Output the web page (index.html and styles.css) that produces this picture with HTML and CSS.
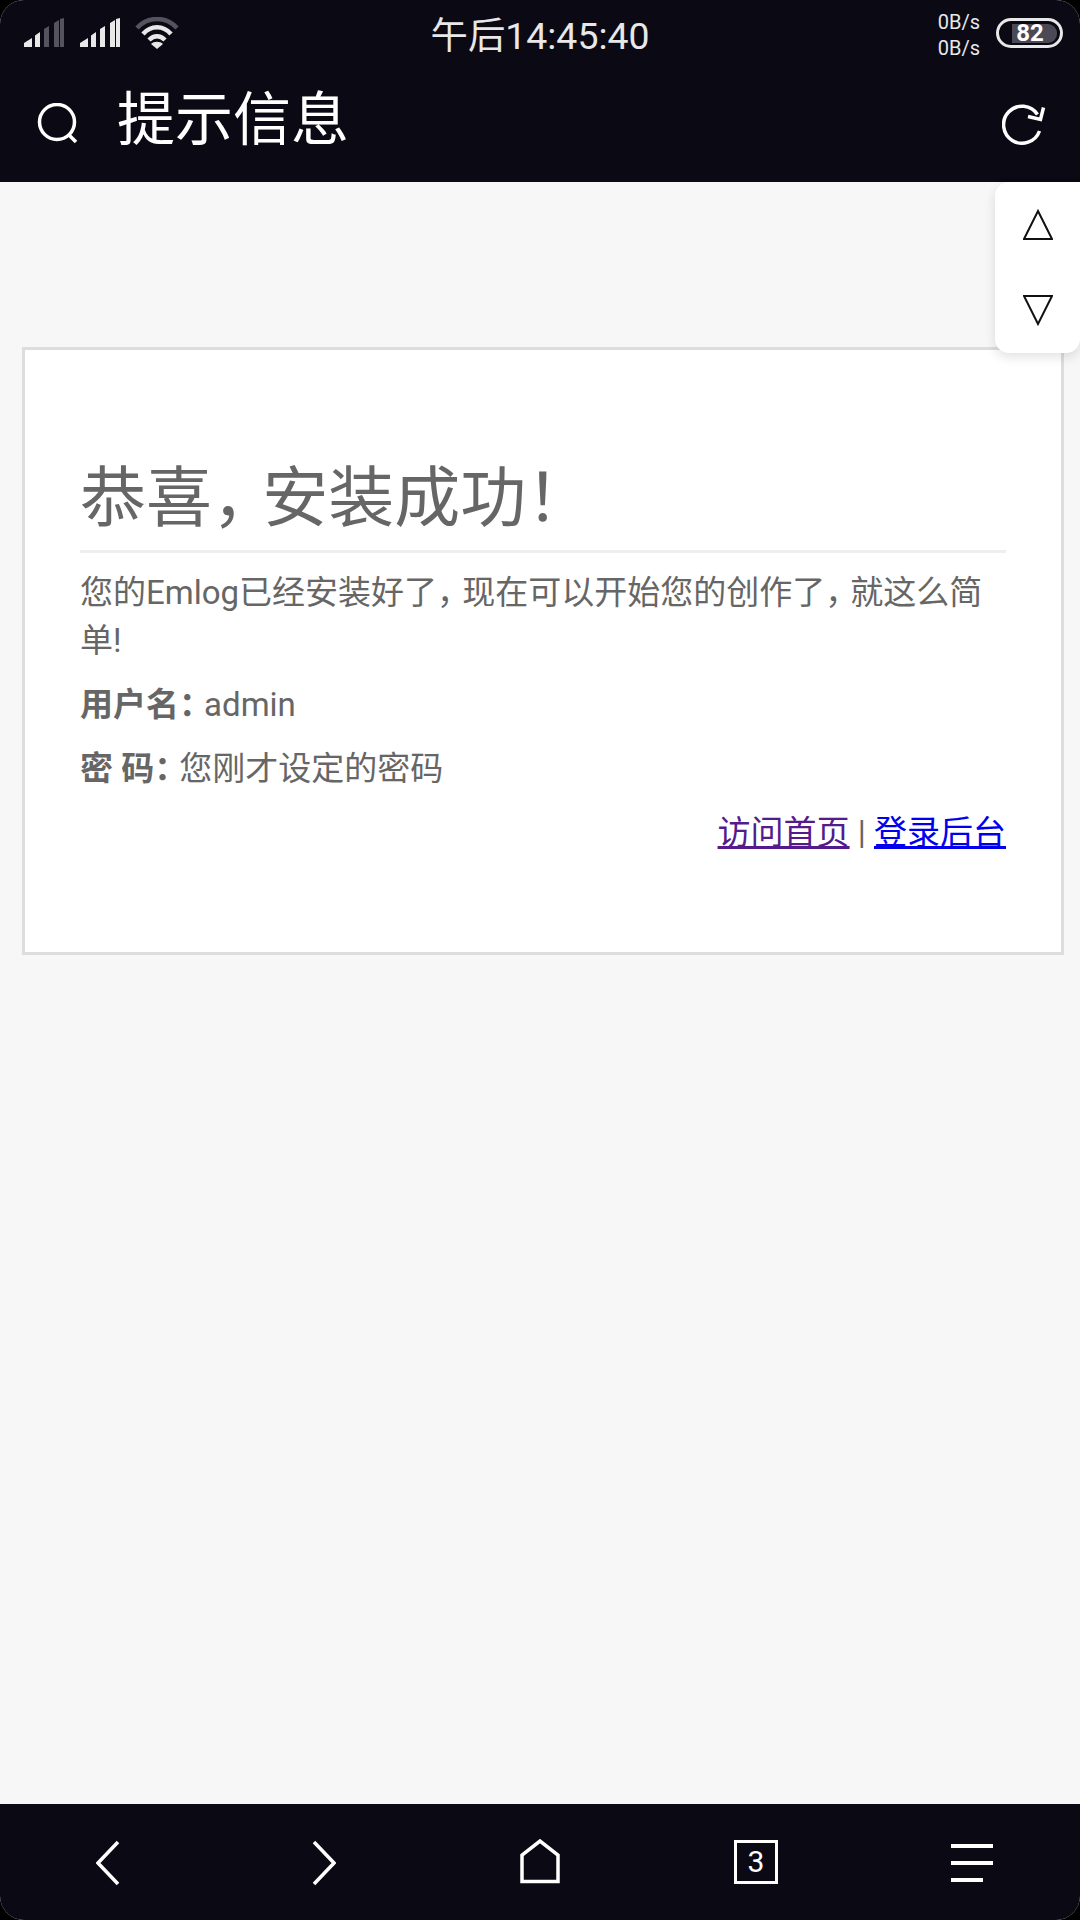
FILE: index.html
```html
<!DOCTYPE html>
<html lang="zh-CN">
<head>
<meta charset="utf-8">
<title>提示信息</title>
<link rel="stylesheet" href="styles.css">
</head>
<body>
<div class="app">
  <div class="status">
    <div class="status-left">
      <svg class="sig" width="40" height="29" viewBox="0 0 40 29"><path class="on" d="M0 29V25L8 20V29ZM11 29V17.500L16 14V29Z"/><path class="dim" d="M20 29V11L25 8V29ZM30 29V5L35 2V29Z"/><path class="dim2" d="M36 29V1L40 0V29Z"/></svg>
      <svg class="sig" width="40" height="29" viewBox="0 0 40 29"><path class="on" d="M0 29V25L8 20V29ZM11 29V17.500L16 14V29ZM20 29V11L25 8V29ZM30 29V5L35 2V29Z"/><path class="on" d="M36 29V1L40 0V29Z"/></svg>
      <svg class="wifi" width="44" height="32" viewBox="0 0 44 32"><path class="wf-dim" d="M2 11C13 -1 31 -1 42 11"/><path class="wf-on" d="M8 17C16 8 28 8 36 17"/><path class="wf-on" d="M14 23C19 18 25 18 30 23"/><path class="wf-fill" d="M22 32L16 27C19 24 25 24 28 27Z"/></svg>
    </div>
    <div class="clock">午后14:45:40</div>
    <div class="status-right">
      <div class="speed"><span>0B/s</span><span>0B/s</span></div>
      <div class="battery"><span class="batt-fill"></span><span class="batt-num">82</span></div>
    </div>
  </div>
  <header class="topbar">
    <svg class="ic-search" width="42" height="42" viewBox="0 0 42 42"><circle cx="20" cy="19" r="17.500"/><path d="M31 31L39 39"/></svg>
    <h2 class="page-title">提示信息</h2>
    <svg class="ic-refresh" width="44" height="44" viewBox="0 0 44 44"><path d="M37.500 27A18.500 18.500 0 1 1 35.500 10.500"/><path d="M26 12.500L38.500 15.500L41.500 3.500"/></svg>
  </header>
  <main class="content">
    <section class="card">
      <h1 class="card-title">恭喜<span class="pc">，</span>安装成功！</h1>
      <p class="line">您的Emlog已经安装好了<span class="pc">，</span>现在可以开始您的创作了<span class="pc">，</span>就这么简<br>单!</p>
      <p class="line"><b>用户名<span class="pc">：</span></b>admin</p>
      <p class="line"><b>密 码<span class="pc">：</span></b>您刚才设定的密码</p>
      <p class="line links"><a class="visited" href="#home">访问首页</a> | <a class="fresh" href="#admin">登录后台</a></p>
    </section>
    <div class="scroller">
      <svg width="30" height="31" viewBox="0 0 30 31"><path d="M15 2L29 30H1Z"/></svg>
      <svg width="30" height="31" viewBox="0 0 30 31"><path d="M1 1H29L15 29Z"/></svg>
    </div>
  </main>
  <nav class="bottombar">
    <div class="cell"><svg width="24" height="46" viewBox="0 0 24 46"><path d="M22 2L2 23L22 44"/></svg></div>
    <div class="cell"><svg width="24" height="46" viewBox="0 0 24 46"><path d="M2 2L22 23L2 44"/></svg></div>
    <div class="cell"><svg class="ic-home" width="40" height="46" viewBox="0 0 40 46"><path d="M2 42.500V16L20 2L38 16V42.500Z"/></svg></div>
    <div class="cell"><div class="tabs">3</div></div>
    <div class="cell"><div class="menu"><i></i><i></i><i class="short"></i></div></div>
  </nav>
</div>
</body>
</html>
```
FILE: styles.css
```css
* { box-sizing: border-box; }
html, body { margin: 0; padding: 0; background: #000; }
body { font-family: Roboto, "Noto Sans CJK SC", sans-serif; }
.app {
  width: 1080px;
  height: 1920px;
  display: flex;
  flex-direction: column;
  background: #f7f7f7;
  border-radius: 24px;
  overflow: hidden;
}
.status {
  height: 58px;
  flex: none;
  background: #0b0a14;
  display: grid;
  grid-template-columns: 1fr auto 1fr;
  align-items: start;
  padding: 0 17px 0 24px;
}
.status-left { display: flex; gap: 16px; padding-top: 18px; }
.sig .on { fill: #e8e8e8; }
.sig .dim { fill: #55545e; }
.sig .dim2 { fill: #55545e; }
.wifi path { fill: none; stroke-width: 4.500; }
.wifi .wf-dim { stroke: #55545e; }
.wifi .wf-on { stroke: #e8e8e8; }
.wifi .wf-fill { fill: #e8e8e8; stroke: none; }
.wifi { margin: -1px 0 0 -1px; }
.clock {
  color: #e8e8e8;
  font-size: 37.400px;
  line-height: 40px;
  padding-top: 16px;
  margin-left: -7px;
}
.status-right { display: flex; justify-content: flex-end; gap: 16px; padding-top: 9px; }
.speed {
  display: flex;
  flex-direction: column;
  color: #e8e8e8;
  font-size: 20px;
  line-height: 26px;
  align-items: flex-end;
}
.battery {
  width: 67px;
  height: 30px;
  margin-top: 9px;
  border: 3px solid #e8e8e8;
  border-radius: 15px;
  position: relative;
  display: flex;
  align-items: center;
  justify-content: center;
}
.batt-fill {
  position: absolute;
  left: 13px;
  top: 3px;
  bottom: 2px;
  right: 3px;
  background: #4a4955;
  border-radius: 0 9px 9px 0;
}
.batt-num {
  position: relative;
  color: #fff;
  font-size: 24px;
  font-weight: 700;
  line-height: 24px;
  margin-left: 1px;
}
.topbar {
  height: 124px;
  flex: none;
  background: #0b0a14;
  display: flex;
  align-items: flex-start;
  padding: 46px 34px 0 37px;
}
.topbar svg { fill: none; stroke: #fff; stroke-width: 3.500; flex: none; }
.ic-search { margin-top: -1px; }
.page-title {
  margin: -18px 0 0 38px;
  flex: 1;
  color: #fff;
  font-size: 58px;
  line-height: 68px;
  font-weight: 400;
}
.ic-refresh { margin-top: 0; }
.content {
  flex: 1;
  position: relative;
  padding: 165px 16px 0 22px;
  color: #666;
  font-size: 33px;
  line-height: 48px;
}
.card {
  height: 608px;
  background: #fff;
  border: 3px solid #ddd;
  padding: 112px 55px 0;
}
.card-title {
  margin: 0 0 16px;
  font-size: 66px;
  line-height: 74px;
  font-weight: 400;
  padding-bottom: 14px;
  border-bottom: 3px solid #eee;
}
.pc { font-feature-settings: "halt"; padding-right: .26em; }
.line { margin: 0 0 16px; }
.line b { font-weight: 700; }
.links { text-align: right; }
.visited { color: #551a8b; }
.fresh { color: #00e; }
.scroller {
  position: absolute;
  right: 0;
  top: 0;
  width: 85px;
  height: 171px;
  background: #fff;
  border-radius: 14px 0 14px 14px;
  box-shadow: 0 4px 12px rgba(0, 0, 0, .12);
  display: flex;
  flex-direction: column;
  gap: 55px;
  padding: 27px 0 0 28px;
}
.scroller svg { fill: none; stroke: #111; stroke-width: 2; }
.bottombar {
  height: 116px;
  flex: none;
  background: #0b0a14;
  display: grid;
  grid-template-columns: repeat(5, 216px);
}
.cell { display: flex; justify-content: center; padding-top: 36px; }
.cell svg { fill: none; stroke: #fff; stroke-width: 3.500; }
.cell .ic-home { margin-top: -1px; }
.tabs {
  width: 44px;
  height: 44px;
  border: 3px solid #fff;
  color: #fff;
  font-size: 30px;
  line-height: 38px;
  font-weight: 400;
  text-align: center;
}
.menu { width: 42px; padding-top: 4px; display: flex; flex-direction: column; gap: 13px; }
.menu i { display: block; height: 4px; background: #fff; }
.menu .short { width: 32px; }
```
